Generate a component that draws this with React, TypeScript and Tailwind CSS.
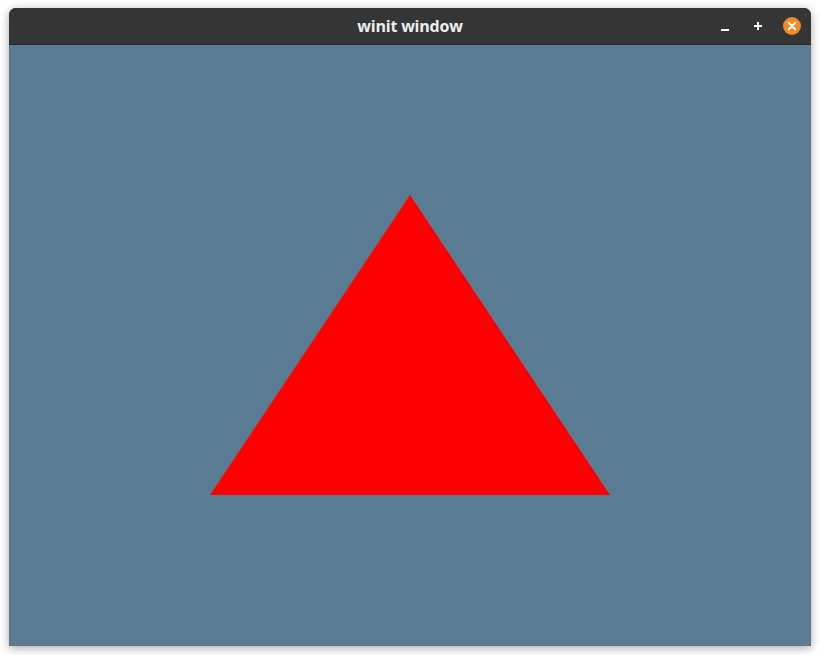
import React from "react";

export default function App() {
  return (
    <div className="w-[820px] h-[655px] bg-white overflow-hidden pt-[8px] pl-[9px]">
      <div className="w-[802px] flex flex-col rounded-t-[7px] overflow-hidden shadow-[0_2px_10px_rgba(0,0,0,0.35)] bg-[#333333]">
        <div className="relative h-[37px] bg-[#353535] border-b border-[#262626] flex items-center justify-center">
          <span
            className="text-[16px] font-bold text-[#eeeeee] tracking-[-0.2px]"
            style={{ fontFamily: '"Open Sans", "Noto Sans", sans-serif' }}
          >
            winit window
          </span>
          <div className="absolute right-[9px] top-0 h-full flex items-center gap-[14px]">
            <svg width="20" height="20" viewBox="0 0 20 20">
              <rect x="7" y="13" width="8" height="2" fill="#ffffff" />
            </svg>
            <svg width="20" height="20" viewBox="0 0 20 20">
              <rect x="6" y="9" width="8" height="2" fill="#ffffff" />
              <rect x="9" y="6" width="2" height="8" fill="#ffffff" />
            </svg>
            <svg width="20" height="20" viewBox="0 0 20 20">
              <circle cx="10" cy="10" r="9" fill="#f28a2a" />
              <path d="M6.8 6.8 L13.2 13.2 M13.2 6.8 L6.8 13.2" stroke="#ffffff" strokeWidth="2" strokeLinecap="round" />
            </svg>
          </div>
        </div>
        <div className="w-[802px] h-[601px] bg-[#597c94] border-x border-b border-[#6d7278]">
          <svg width="800" height="600" viewBox="0 0 800 600" className="block">
            <polygon points="400,150 200,450 600,450" fill="#ff0000" />
          </svg>
        </div>
      </div>
    </div>
  );
}
